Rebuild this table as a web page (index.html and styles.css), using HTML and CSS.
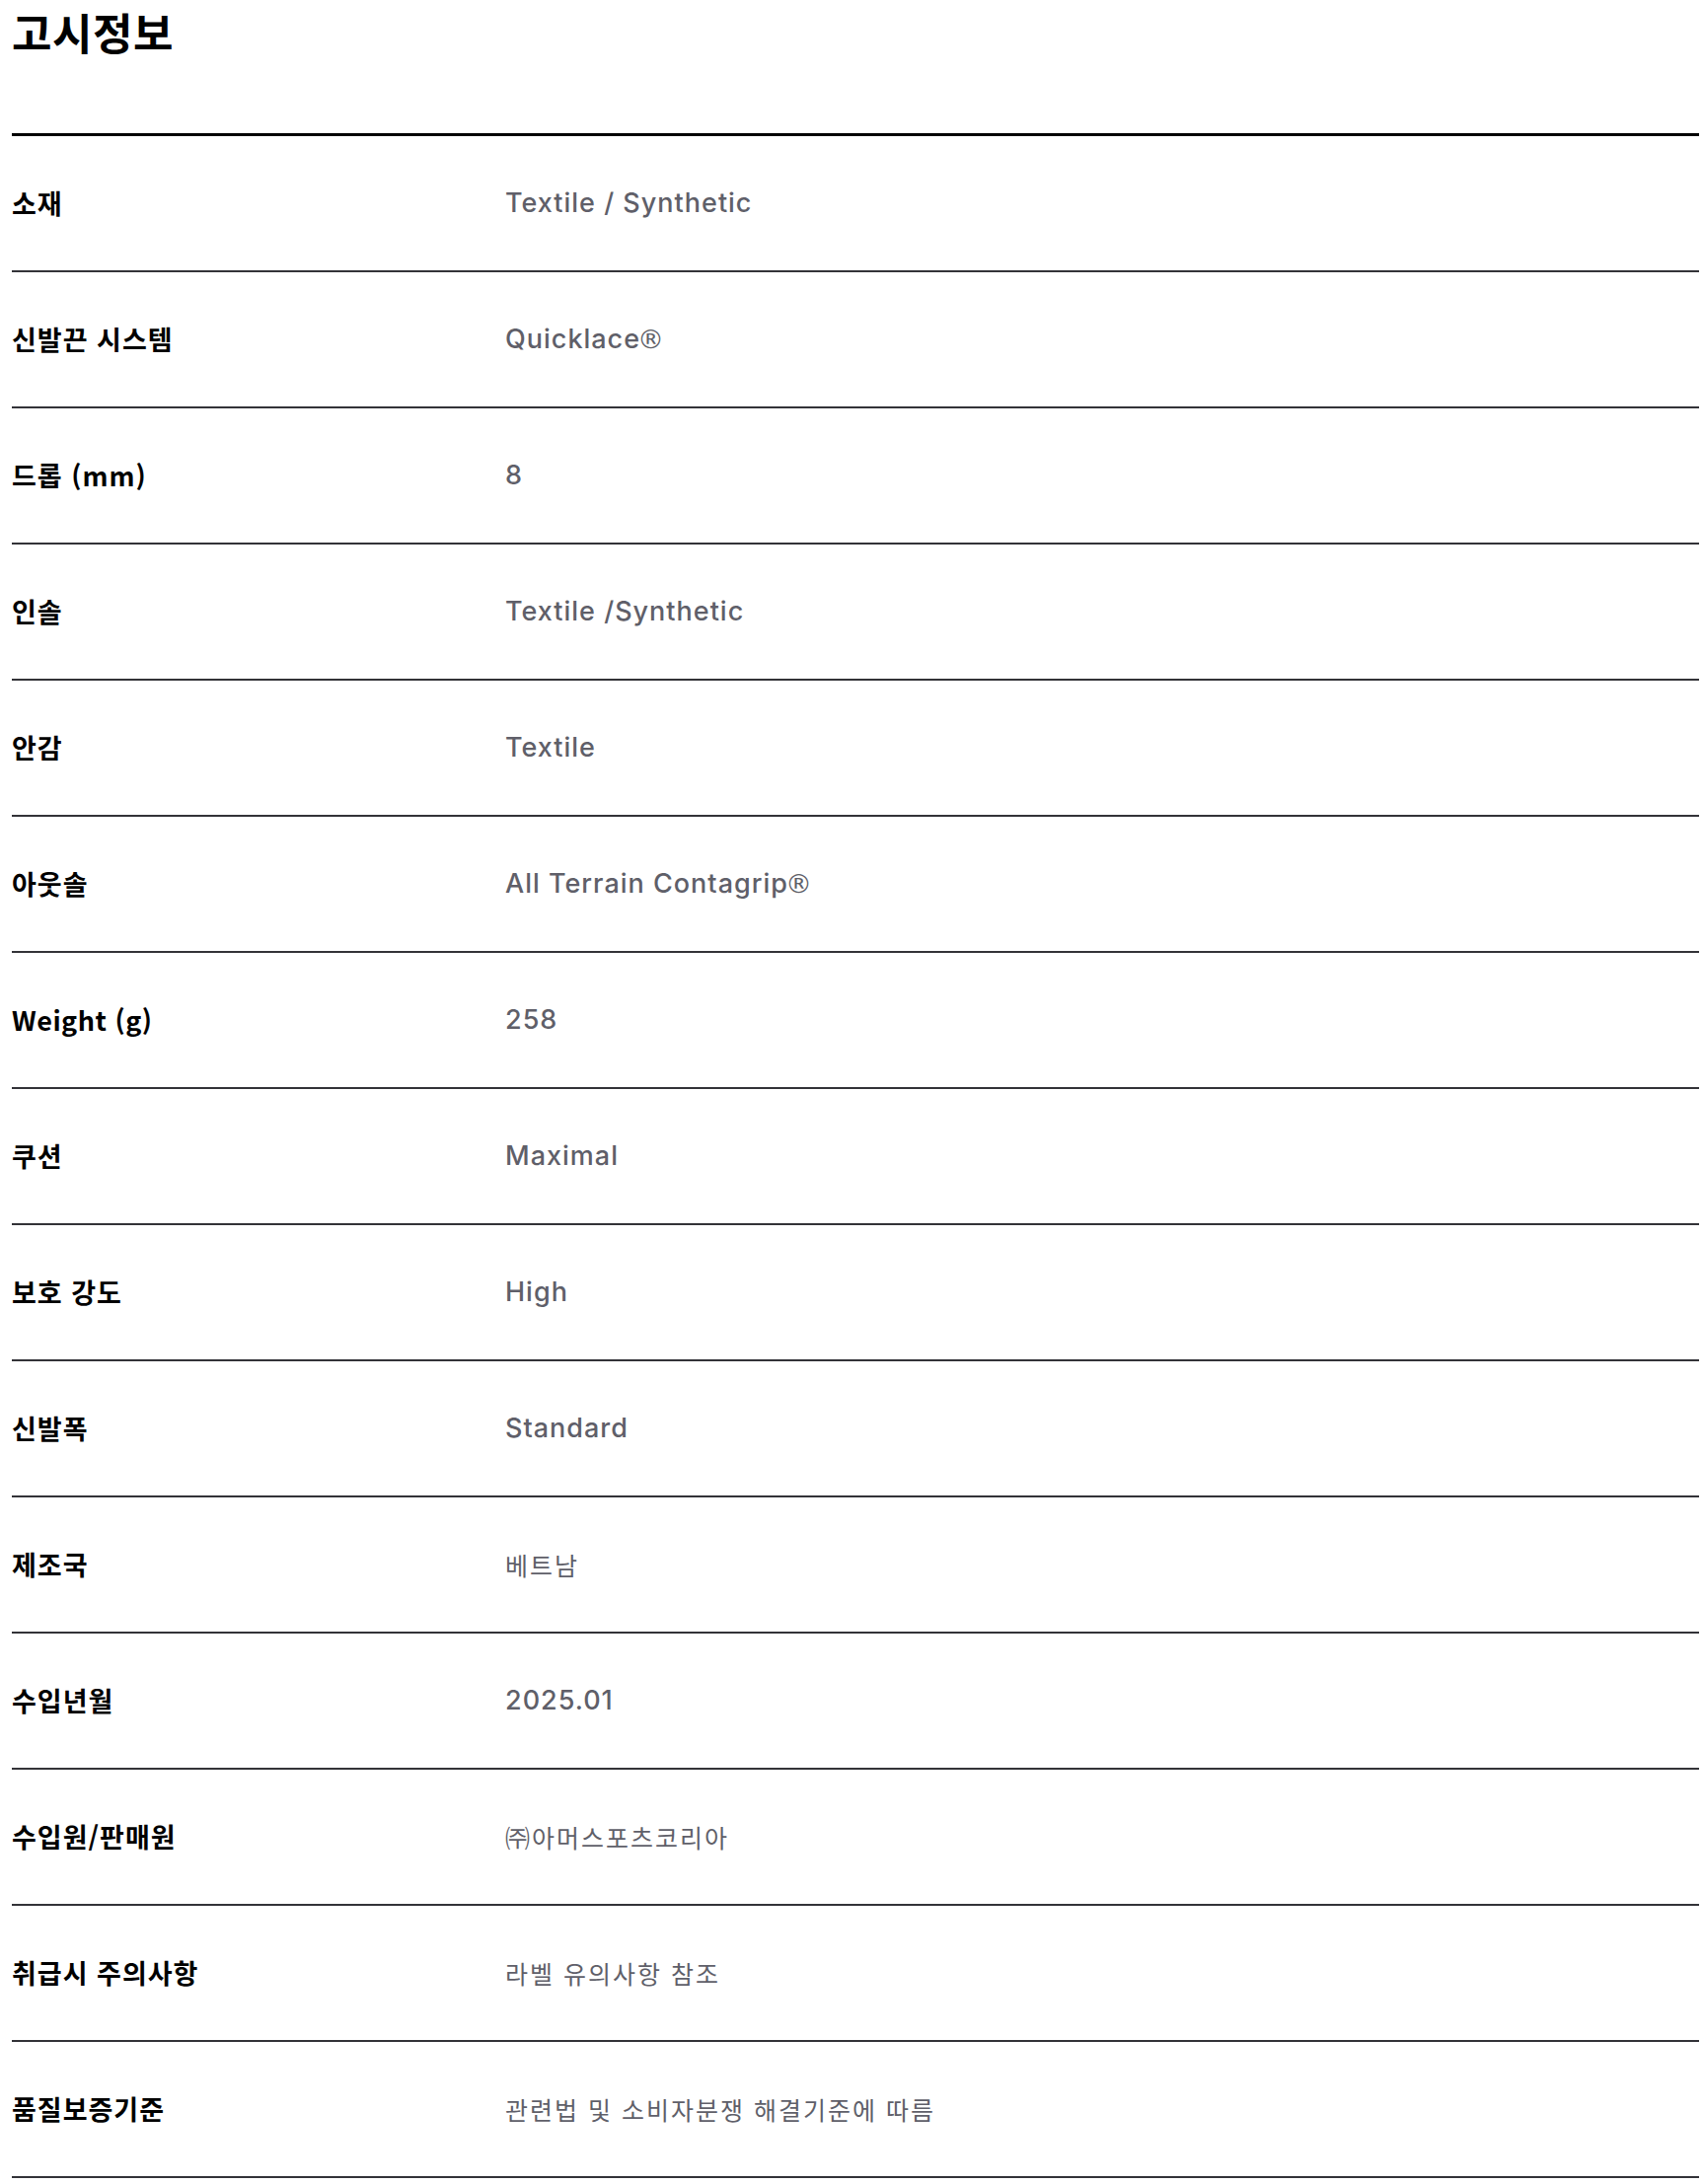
FILE: index.html
```html
<!DOCTYPE html>
<html lang="ko">
<head>
<meta charset="utf-8">
<title>고시정보</title>
<link rel="stylesheet" href="styles.css">
</head>
<body>
<section class="notice">
  <h1 class="notice-title">고시정보</h1>
  <dl class="spec">
    <div class="spec-row"><dt class="spec-label">소재</dt><dd class="spec-value">Textile / Synthetic</dd></div>
    <div class="spec-row"><dt class="spec-label">신발끈 시스템</dt><dd class="spec-value">Quicklace<span class="reg">®</span></dd></div>
    <div class="spec-row"><dt class="spec-label">드롭 (mm)</dt><dd class="spec-value">8</dd></div>
    <div class="spec-row"><dt class="spec-label">인솔</dt><dd class="spec-value">Textile /Synthetic</dd></div>
    <div class="spec-row"><dt class="spec-label">안감</dt><dd class="spec-value">Textile</dd></div>
    <div class="spec-row"><dt class="spec-label">아웃솔</dt><dd class="spec-value">All Terrain Contagrip<span class="reg">®</span></dd></div>
    <div class="spec-row"><dt class="spec-label latin">Weight (g)</dt><dd class="spec-value">258</dd></div>
    <div class="spec-row"><dt class="spec-label">쿠션</dt><dd class="spec-value">Maximal</dd></div>
    <div class="spec-row"><dt class="spec-label">보호 강도</dt><dd class="spec-value">High</dd></div>
    <div class="spec-row"><dt class="spec-label">신발폭</dt><dd class="spec-value">Standard</dd></div>
    <div class="spec-row"><dt class="spec-label">제조국</dt><dd class="spec-value ko">베트남</dd></div>
    <div class="spec-row"><dt class="spec-label">수입년월</dt><dd class="spec-value">2025.01</dd></div>
    <div class="spec-row"><dt class="spec-label">수입원/판매원</dt><dd class="spec-value ko">㈜아머스포츠코리아</dd></div>
    <div class="spec-row"><dt class="spec-label">취급시 주의사항</dt><dd class="spec-value ko">라벨 유의사항 참조</dd></div>
    <div class="spec-row"><dt class="spec-label">품질보증기준</dt><dd class="spec-value ko">관련법 및 소비자분쟁 해결기준에 따름</dd></div>
  </dl>
</section>
</body>
</html>
```

FILE: styles.css
```css
html, body {
  margin: 0;
  padding: 0;
  background: #ffffff;
}

body {
  font-family: "Noto Sans CJK KR", "Noto Sans", sans-serif;
  color: #000000;
}

.notice {
  padding: 0 4px 0 12px;
}

.notice-title {
  margin: 0;
  font-size: 44px;
  font-weight: 700;
  line-height: 64px;
  height: 135px;
  letter-spacing: 0.5px;
}

.spec {
  margin: 0;
  border-top: 3px solid #000000;
}

.spec-row {
  display: grid;
  grid-template-columns: 500px 1fr;
  align-items: center;
  height: 136px;
  border-bottom: 2px solid #333338;
}

.spec-label {
  margin: 0;
  font-size: 27px;
  font-weight: 700;
  line-height: 32px;
  letter-spacing: 1px;
}

.spec-label.latin {
  letter-spacing: 0.5px;
}

.spec-value {
  margin: 0;
  font-family: "Inter", "Noto Sans CJK KR", sans-serif;
  font-size: 27px;
  font-weight: 500;
  line-height: 32px;
  letter-spacing: 1px;
  color: #5f5f69;
}

.spec-value.ko {
  font-family: "Noto Sans CJK KR", sans-serif;
  font-size: 25px;
  font-weight: 400;
  letter-spacing: 2px;
}

.reg {
  margin-left: -3px;
  font-family: "DejaVu Sans", sans-serif;
  font-weight: 400;
  letter-spacing: 0;
}
```
